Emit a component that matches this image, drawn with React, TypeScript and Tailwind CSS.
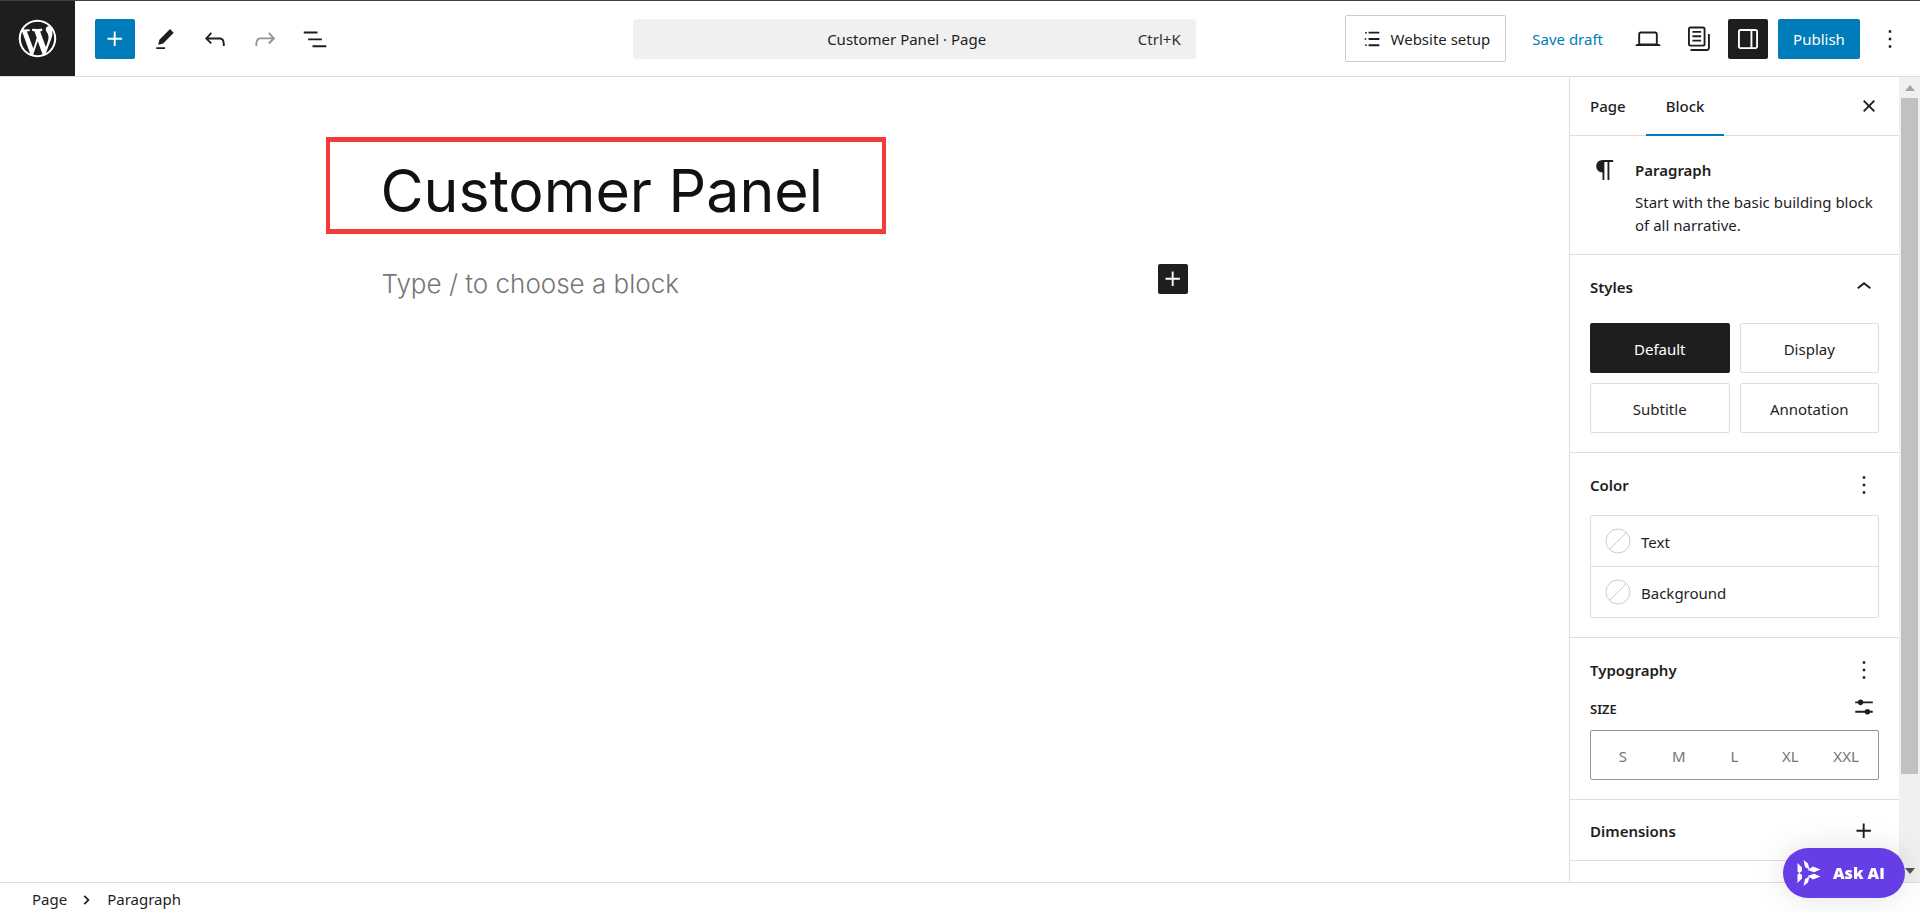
import { useState, type ReactNode } from 'react';

// ---------- icons ----------

const paths = {
  plus: 'M11 12.5V17.5H12.5V12.5H17.5V11H12.5V6H11V11H6V12.5H11Z',
  edit: 'm19 7-3-3-8.5 8.5-1 4 4-1L19 7Zm-7 11.5H5V20h7v-1.5Z',
  undo: 'M18.3 11.7c-.6-.6-1.4-.9-2.3-.9H6.7l2.9-3.3-1.1-1-4.5 5L8.5 16l1-1-2.7-2.7H16c.5 0 .9.2 1.3.5 1 1 1 3.4 1 4.5v.3h1.5v-.2c0-1.5 0-4.3-1.5-5.7z',
  redo: 'M15.6 6.5l-1.1 1 2.9 3.3H8c-.9 0-1.7.3-2.3.9-1.4 1.5-1.4 4.2-1.4 5.6v.2h1.5v-.3c0-1.1 0-3.5 1-4.5.3-.3.7-.5 1.3-.5h9.2L14.5 15l1.1 1.1 4.6-4.6-4.6-5z',
  listView: 'M3 6h11v1.5H3V6Zm3.5 5.5h11V13h-11v-1.5ZM21 17H10v1.5h11V17Z',
  checklist: 'M4.5 4.3h1.800v1.800H4.500V4.300ZM8.300 4.100H20v2H8.300v-2ZM4 11.100h1.800v1.800H4v-1.800Zm4.300-.1H20v2H8.300v-2ZM4.500 17.900h1.800v1.800H4.500v-1.800Zm3.800-.1H20v2H8.300v-2Z',
  desktop: 'M20.5 16h-.7V8c0-1.1-.9-2-2-2H6.2c-1.1 0-2 .9-2 2v8h-.7c-.8 0-1.5.7-1.5 1.5h20c0-.8-.7-1.5-1.5-1.5zM5.7 8c0-.3.2-.5.5-.5h11.6c.3 0 .5.2.5.5v7.6H5.7V8z',
  pages: 'M14.5 5.5h-7V7h7V5.5ZM7.5 9h7v1.5h-7V9Zm7 3.5h-7V14h7v-1.5ZM16 2H6a2 2 0 0 0-2 2v12a2 2 0 0 0 2 2h10a2 2 0 0 0 2-2V4a2 2 0 0 0-2-2ZM6 3.5h10a.5.5 0 0 1 .5.5v12a.5.5 0 0 1-.5.5H6a.5.5 0 0 1-.5-.5V4a.5.5 0 0 1 .5-.5ZM20 8v11c0 .69-.31 1-.999 1H6v1.5h13.001c1.52 0 2.499-.982 2.499-2.5V8H20Z',
  drawer: 'M18 4H6c-1.1 0-2 .9-2 2v12c0 1.1.9 2 2 2h12c1.1 0 2-.9 2-2V6c0-1.1-.9-2-2-2zm-4 14.5H6c-.3 0-.5-.2-.5-.5V6c0-.3.2-.5.5-.5h8v13zm4.5-.5c0 .3-.2.5-.5.5h-2.5v-13H18c.3 0 .5.2.5.5v12z',
  more: 'M13 19h-2v-2h2v2zm0-6h-2v-2h2v2zm0-6h-2V5h2v2z',
  close: 'M12 13.06l3.712 3.713 1.061-1.06L13.061 12l3.712-3.712-1.06-1.06L12 10.938 8.288 7.227l-1.061 1.06L10.939 12l-3.712 3.712 1.06 1.061L12 13.061z',
  paragraph: 'm9.996 14v-.225l.004 0v6.225h1.5v-14.5h2.5v14.5h1.5v-14.5h3v-1.5h-8.504c-2.761 0-5 2.239-5 5 0 2.761 2.239 5 5 5z',
  chevronUp: 'M6.5 12.4L12 8l5.5 4.4-.9 1.2L12 10l-4.5 3.6-1-1.2z',
  chevronRight: 'M9.4 6.4 8 7.9l4.2 4.1L8 16.1l1.4 1.5 5.8-5.6z',
  settings: 'm19 7.5h-7.628c-.309-.874-1.142-1.5-2.122-1.5-.98 0-1.813.626-2.122 1.5h-2.128v1.5h2.128c.309.874 1.142 1.5 2.122 1.5.98 0 1.813-.626 2.122-1.5h7.628zM19 15h-2.128c-.309-.874-1.142-1.5-2.122-1.5s-1.813.626-2.122 1.5h-7.628v1.5h7.628c.309.874 1.142 1.5 2.122 1.5s1.813-.626 2.122-1.5h2.128z',
};

function Icon({ name, className = 'size-[30px]' }: { name: keyof typeof paths; className?: string }) {
  return (
    <svg viewBox="0 0 24 24" fill="currentColor" fillRule="evenodd" aria-hidden="true" className={`shrink-0 ${className}`}>
      <path d={paths[name]} />
    </svg>
  );
}

function WordPressLogo() {
  return (
    <svg viewBox="-2 -2 24 24" fill="currentColor" aria-hidden="true" className="size-[45px]">
      <path d="M20 10c0-5.51-4.49-10-10-10C4.48 0 0 4.49 0 10c0 5.52 4.48 10 10 10 5.51 0 10-4.48 10-10zM7.78 15.37L4.37 6.22c.55-.02 1.17-.08 1.17-.08.5-.06.44-1.13-.06-1.11 0 0-1.45.11-2.37.11-.18 0-.37 0-.58-.01C4.12 2.69 6.87 1.11 10 1.11c2.33 0 4.45.87 6.05 2.34-.68-.11-1.65.39-1.65 1.58 0 .74.45 1.36.9 2.1.35.61.55 1.36.55 2.46 0 1.49-1.4 5-1.4 5l-3.03-8.37c.54-.02.82-.17.82-.17.5-.05.44-1.25-.06-1.22 0 0-1.44.12-2.38.12-.87 0-2.33-.12-2.33-.12-.5-.03-.56 1.2-.06 1.22l.92.08 1.26 3.41zM17.41 10c.24-.64.74-1.87.43-4.25.7 1.29 1.05 2.71 1.05 4.25 0 3.29-1.73 6.24-4.4 7.78.97-2.59 1.94-5.2 2.92-7.78zM6.1 18.09C3.12 16.65 1.11 13.53 1.11 10c0-1.3.23-2.48.72-3.59C3.25 10.3 4.67 14.2 6.1 18.09zm4.03-6.63l2.58 6.98c-.86.29-1.76.45-2.71.45-.79 0-1.57-.11-2.29-.33.81-2.38 1.62-4.74 2.42-7.1z" />
    </svg>
  );
}

// Six leaves pointing along the sides of a triangle
function AiLogo() {
  return (
    <svg viewBox="0 0 24 26" fill="currentColor" aria-hidden="true" className="h-[26px] w-6">
      <path d="M.5 3 5 7.5V11L.5 14.500zM.5 23 5 18.500V15L.5 11.500zM6.500 0 11 3.500l1.500 6L8 7zM6.500 26l4.500-3.500 1.500-6L8 19zM10.500 10 16 6.500 23.500 9.500 17 12.200zM10.500 16l5.500 3.500 7.500-3L17 13.800z" />
    </svg>
  );
}

// ---------- header ----------

function IconButton({ name, label, disabled = false }: { name: keyof typeof paths; label: string; disabled?: boolean }) {
  return (
    <button
      type="button"
      aria-label={label}
      disabled={disabled}
      className="flex size-10 items-center justify-center rounded-xs disabled:text-[#949494]"
    >
      <Icon name={name} />
    </button>
  );
}

function Header() {
  return (
    <header className="flex shrink-0 items-center border-t border-b border-t-[#3f404c] border-b-[#ddd]">
      <a href="#pages" aria-label="View Pages" className="mr-5 flex size-[75px] items-center justify-center bg-[#1e1e1e] text-white">
        <WordPressLogo />
      </a>
      <div className="flex gap-[10px]">
        <button type="button" aria-label="Block Inserter" className="flex size-10 items-center justify-center rounded-xs bg-[#007cba] text-white">
          <Icon name="plus" />
        </button>
        <IconButton name="edit" label="Tools" />
        <IconButton name="undo" label="Undo" />
        <IconButton name="redo" label="Redo" disabled />
        <IconButton name="listView" label="Document Overview" />
      </div>

      <div className="flex-[2]" />
      <button type="button" className="grid h-10 w-[563px] grid-cols-[1fr_auto_1fr] items-center rounded bg-[#f0f0f0] pt-0.5 pr-[15px]">
        <span className="col-start-2">Customer Panel · Page</span>
        <span className="text-right text-[#2f2f2f]">Ctrl+K</span>
      </button>
      <div className="flex-1" />

      <div className="flex items-center gap-[10px] pr-[10px]">
        <button type="button" className="mr-4 flex h-[47px] items-center gap-2 rounded-xs border border-[#ccc] px-[15px]">
          <Icon name="checklist" className="size-[22px]" />
          <span className="pt-0.5">Website setup</span>
        </button>
        <button type="button" className="mr-[15px] pt-0.5 text-[#007cba]">
          Save draft
        </button>
        <IconButton name="desktop" label="View" />
        <IconButton name="pages" label="Page templates" />
        <button type="button" aria-label="Settings" aria-pressed="true" className="flex size-10 items-center justify-center rounded-xs bg-[#1e1e1e] text-white">
          <Icon name="drawer" />
        </button>
        <button type="button" className="h-10 w-[82px] rounded-xs bg-[#007cba] pt-0.5 text-white">
          Publish
        </button>
        <IconButton name="more" label="Options" />
      </div>
    </header>
  );
}

// ---------- canvas ----------

function Canvas() {
  return (
    <main className="min-w-0 flex-1 bg-white pt-[60px]">
      <div className="mx-auto max-w-[806px]">
        <h1 className="-ml-14 w-[560px] border-x-4 border-y-[5px] border-[#f43b3b] pt-[10px] pl-[51px] font-[Inter,sans-serif] text-[59px] leading-[77px] font-normal text-[#111]">
          Customer Panel
        </h1>
        <div className="flex items-start justify-between pt-[30px]">
          <p className="font-[Inter,sans-serif] text-[26px] leading-10 font-light text-[#767676]">
            Type / to choose a block
          </p>
          <button type="button" aria-label="Add block" className="flex size-[30px] items-center justify-center rounded-xs bg-[#1e1e1e] text-white">
            <Icon name="plus" />
          </button>
        </div>
      </div>
    </main>
  );
}

// ---------- settings sidebar ----------

const tabs = ['Page', 'Block'];
const styleNames = ['Default', 'Display', 'Subtitle', 'Annotation'];
const colorNames = ['Text', 'Background'];
const sizes = ['S', 'M', 'L', 'XL', 'XXL'];

function PanelTitle({ title, icon, label }: { title: string; icon: keyof typeof paths; label: string }) {
  return (
    <div className="flex h-[30px] items-center justify-between">
      <h2 className="font-semibold">{title}</h2>
      <button type="button" aria-label={label}>
        <Icon name={icon} />
      </button>
    </div>
  );
}

function Panel({ children }: { children: ReactNode }) {
  return <section className="border-b border-[#ddd] px-5 pt-[17px] pb-[19px]">{children}</section>;
}

function Sidebar() {
  const [tab, setTab] = useState('Block');
  const [style, setStyle] = useState('Default');
  const [size, setSize] = useState('');

  return (
    <aside className="flex w-[351px] shrink-0 border-l border-[#ddd]">
      <div className="min-w-0 flex-1 overflow-hidden">
        <div className="flex h-[59px] border-b border-[#ddd]">
          {tabs.map((t) => (
            <button
              key={t}
              type="button"
              onClick={() => setTab(t)}
              className={`-mb-px px-5 font-medium ${tab === t ? 'shadow-[inset_0_-2px_0_#007cba]' : ''}`}
            >
              {t}
            </button>
          ))}
          <button type="button" aria-label="Close Settings" className="mr-[15px] ml-auto">
            <Icon name="close" />
          </button>
        </div>

        <section className="flex gap-[15px] border-b border-[#ddd] px-5 pt-[19px] pb-[17px]">
          <Icon name="paragraph" />
          <div>
            <h2 className="mb-[6px] leading-[30px] font-semibold">Paragraph</h2>
            <p className="leading-[23px]">Start with the basic building block of all narrative.</p>
          </div>
        </section>

        <Panel>
          <PanelTitle title="Styles" icon="chevronUp" label="Toggle styles" />
          <div className="mt-[21px] grid grid-cols-2 gap-[10px]">
            {styleNames.map((s) => (
              <button
                key={s}
                type="button"
                onClick={() => setStyle(s)}
                className={`h-[50px] rounded-xs border pt-0.5 ${
                  style === s ? 'border-[#1e1e1e] bg-[#1e1e1e] text-white' : 'border-[#ddd]'
                }`}
              >
                {s}
              </button>
            ))}
          </div>
        </Panel>

        <Panel>
          <PanelTitle title="Color" icon="more" label="Color options" />
          <div className="mt-[15px] divide-y divide-[#ddd] rounded-xs border border-[#ddd]">
            {colorNames.map((c) => (
              <button key={c} type="button" className="flex w-full items-center gap-[10px] px-[14px] py-3">
                <svg viewBox="0 0 26 26" fill="none" stroke="#ccc" aria-hidden="true" className="size-[26px]">
                  <circle cx="13" cy="13" r="12" />
                  <path d="M4.5 21.5 21.5 4.5" />
                </svg>
                <span className="pt-0.5">{c}</span>
              </button>
            ))}
          </div>
        </Panel>

        <Panel>
          <PanelTitle title="Typography" icon="more" label="Typography options" />
          <div className="mt-[7px] mb-2 flex items-center justify-between">
            <h3 className="pt-1.5 text-[13px] font-semibold">SIZE</h3>
            <button type="button" aria-label="Set custom size">
              <Icon name="settings" />
            </button>
          </div>
          <div className="grid h-[50px] grid-cols-5 rounded-xs border border-[#949494] px-1 pt-0.5 text-[#757575]">
            {sizes.map((s) => (
              <button key={s} type="button" aria-pressed={size === s} onClick={() => setSize(s)}>
                {s}
              </button>
            ))}
          </div>
        </Panel>

        <section className="border-b border-[#ddd] px-5 pt-4 pb-[14px]">
          <PanelTitle title="Dimensions" icon="plus" label="Dimensions options" />
        </section>
      </div>

      {/* Scrollbar */}
      <div aria-hidden="true" className="flex w-[21px] flex-col items-center bg-[#f0f0f0]">
        <div className="flex h-[21px] items-center">
          <svg viewBox="0 0 10 6" className="h-[6px] w-[10px] fill-[#a3a3a3]">
            <path d="M5 0 10 6H0z" />
          </svg>
        </div>
        <div className="w-[17px] flex-[677] bg-[#c1c1c1]" />
        <div className="flex-[86]" />
        <div className="flex h-[22px] items-center">
          <svg viewBox="0 0 10 6" className="h-[6px] w-[10px] fill-[#505050]">
            <path d="M5 6 0 0h10z" />
          </svg>
        </div>
      </div>
    </aside>
  );
}

// ---------- app ----------

export default function App() {
  return (
    <div className="flex h-screen flex-col overflow-hidden bg-white font-['Noto_Sans','Open_Sans',sans-serif] text-[15px] text-[#1e1e1e]">
      <Header />
      <div className="flex min-h-0 flex-1">
        <Canvas />
        <Sidebar />
      </div>
      <footer className="flex h-[30px] shrink-0 items-center gap-[10px] border-t border-[#ddd] px-8 pt-1">
        <a href="#page">Page</a>
        <Icon name="chevronRight" className="size-5" />
        <span>Paragraph</span>
      </footer>

      <button
        type="button"
        className="fixed right-[15px] bottom-[14px] flex h-[50px] w-[122px] items-center gap-3 rounded-full bg-[#673de6] pl-[14px] font-['Open_Sans',sans-serif] text-base font-extrabold text-white shadow-[0_0_30px_rgba(0,0,0,0.12)]"
      >
        <AiLogo />
        Ask AI
      </button>
    </div>
  );
}
